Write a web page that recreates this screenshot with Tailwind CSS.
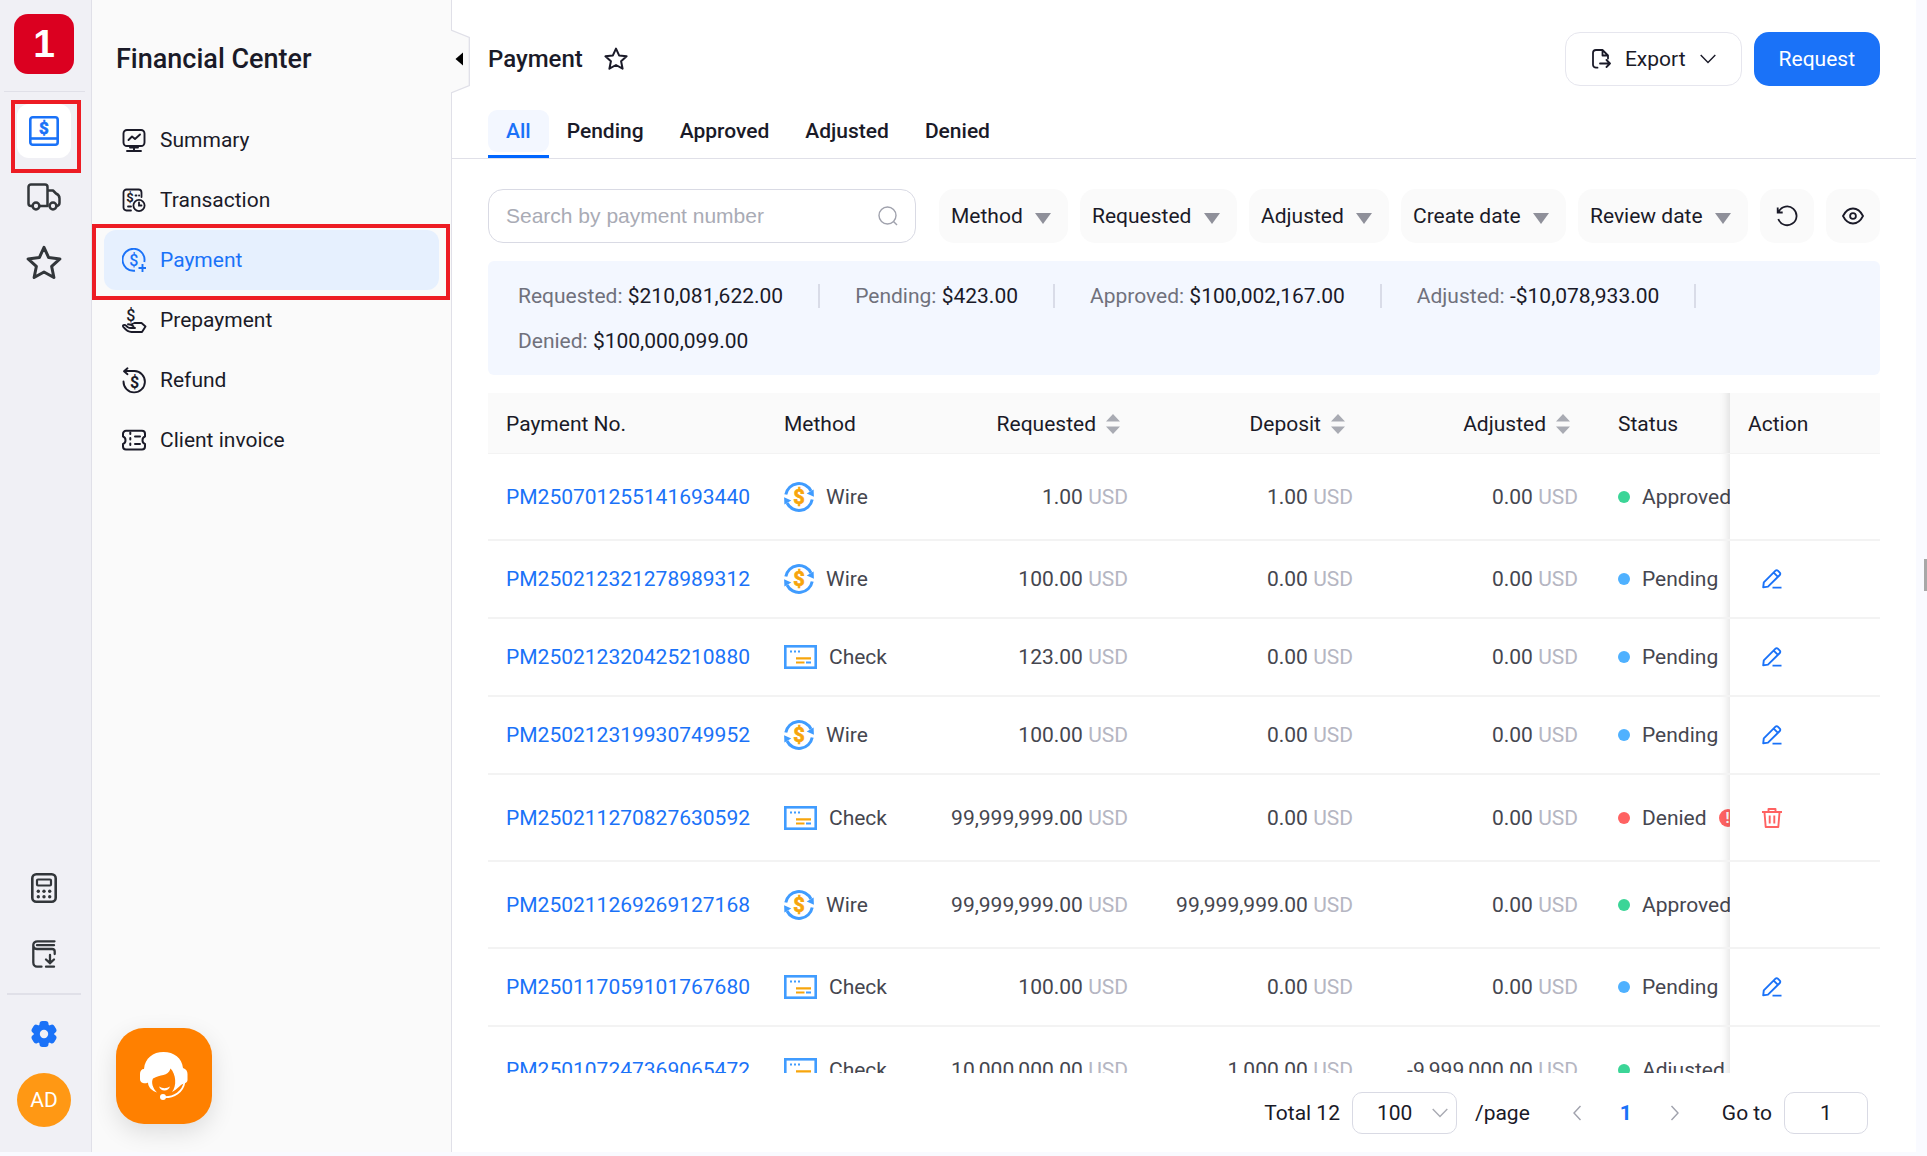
<!DOCTYPE html>
<html lang="en">
<head>
  <meta charset="UTF-8">
  <meta name="viewport" content="width=device-width, initial-scale=1.0">
  <title>Payment - Financial Center</title>
  <script src="https://cdn.jsdelivr.net/npm/@tailwindcss/browser@4"></script>
</head>
<body class="h-screen overflow-hidden flex pb-1 pr-[11px] bg-[#f9faff] text-[#1a1a28] text-[21px] leading-[30px] font-[Roboto,'Liberation_Sans',sans-serif]">

  <!-- Icon sprite -->
  <svg class="hidden">
    <symbol id="i-star" viewBox="0 0 24 24"><path fill="none" stroke="currentColor" stroke-width="2" stroke-linejoin="round" d="M12 1.6l3.1 6.8 7.5.9-5.5 5 1.5 7.4L12 18l-6.6 3.7 1.5-7.4-5.5-5 7.5-.9z"/></symbol>
    <symbol id="i-caret" viewBox="0 0 16 11"><path fill="currentColor" d="M0 0h16L8 11z"/></symbol>
    <symbol id="i-down" viewBox="0 0 16 10"><path fill="none" stroke="currentColor" stroke-width="1.4" d="M.7 1L8 8.6 15.3 1"/></symbol>
    <symbol id="i-sort" viewBox="0 0 14 20"><path fill="currentColor" d="M7 0l7 7.5H0zM0 12.5h14L7 20z"/></symbol>
    <symbol id="i-wire" viewBox="0 0 30 30">
      <path fill="none" stroke="#409cff" stroke-width="3" d="M1.8 12.5A13.4 13.4 0 0 1 27 9M28.2 17.5A13.4 13.4 0 0 1 3 21"/>
      <path fill="#409cff" d="M29.6 7.5l.3 7.3-7.2-3.2zM.4 22.5l-.3-7.3 7.2 3.2z"/>
      <text x="15" y="22" text-anchor="middle" font-size="20" font-weight="700" fill="#f7a50c" stroke="#f7a50c" stroke-width=".7">$</text>
    </symbol>
    <symbol id="i-check" viewBox="0 0 33 24">
      <rect x="1.3" y="1.3" width="30.4" height="21.4" fill="#fff" stroke="#409cff" stroke-width="2.6"/>
      <path stroke="#409cff" stroke-width="2" d="M6 6.5h2M10 6.5h2M14 6.5h2M22 17.5h5"/>
      <path stroke="#f7a50c" stroke-width="2.2" d="M12 13.3h15M12 17.5h8.500"/>
    </symbol>
    <symbol id="i-edit" viewBox="0 0 20 20"><path fill="none" stroke="currentColor" stroke-width="1.9" stroke-linejoin="round" d="M1.200 18.400l.6-5L13.500 1.700a1.600 1.600 0 0 1 2.300 0l2 2a1.600 1.600 0 0 1 0 2.300L6 17.600zM11.700 3.700l4 4M10.500 18.600H19.500"/></symbol>
    <symbol id="i-trash" viewBox="0 0 20 20"><path fill="none" stroke="currentColor" stroke-width="1.9" stroke-linejoin="round" d="M0 4h20M6.500 3.500V1h7v2.500M2.500 4.500L3.700 19h12.600L17.500 4.500M7.700 7.500v8M12.300 7.500v8"/></symbol>
  </svg>

  <!-- Icon rail -->
  <aside class="w-[92px] shrink-0 pt-[14px] pb-[25px] pr-[3px] flex flex-col items-center gap-3 bg-[#f0f0f5] border-r border-[#e0e0e8] text-[#32363a]">
    <a href="#" aria-label="Home" class="size-15 rounded-[14px] bg-[#db0020] text-white font-bold text-[39px] grid place-items-center font-['Liberation_Sans',sans-serif]">1</a>
    <hr class="w-[81px] mt-[5px] border-[#e0e0e8]">
    <a href="#" aria-label="Finance" class="relative size-[54px] rounded-xl bg-white text-[#1a72f8] grid place-items-center">
      <svg class="size-[30px]" viewBox="0 0 30 30"><g fill="none" stroke="currentColor" stroke-width="2.600"><rect x="1.300" y="1.300" width="27.400" height="27.400" rx="2.500"/><path d="M1.300 22.500h27.400"/></g><text x="15" y="17.700" text-anchor="middle" font-size="17" font-weight="700" fill="currentColor" stroke="currentColor" stroke-width=".6">$</text></svg>
      <span class="absolute z-10 -left-[6px] -right-[10px] -top-1 -bottom-[15px] border-4 border-[#ed1c24] pointer-events-none"></span>
    </a>
    <a href="#" aria-label="Shipping" class="size-[54px] grid place-items-center">
      <svg class="w-[34px] h-7" viewBox="0 0 34 28" fill="none" stroke="currentColor" stroke-width="2.500" stroke-linejoin="round"><path d="M5.500 23H4a2.500 2.500 0 0 1-2.500-2.500V4A2.500 2.500 0 0 1 4 1.500h14A2.500 2.500 0 0 1 20.500 4v19h-8M20.500 7.500h5.500l3 3c2.500 1 3.500 2.500 3.500 5V20a3 3 0 0 1-3 3"/><circle cx="9" cy="23" r="3.400"/><circle cx="26" cy="23" r="3.400"/></svg>
    </a>
    <a href="#" aria-label="Favorites" class="size-[54px] grid place-items-center"><svg class="size-9"><use href="#i-star"/></svg></a>

    <a href="#" aria-label="Calculator" class="mt-auto size-[54px] grid place-items-center">
      <svg class="w-[26px] h-[30px]" viewBox="0 0 26 30"><g fill="none" stroke="currentColor"><rect x="1.300" y="1.300" width="23.400" height="27.400" rx="4" stroke-width="2.600"/><rect x="6" y="6.500" width="14" height="6" rx="1" stroke-width="2.200"/></g><g fill="currentColor"><circle cx="7.300" cy="18.300" r="1.700"/><circle cx="13" cy="18.300" r="1.700"/><circle cx="18.700" cy="18.300" r="1.700"/><circle cx="7.300" cy="23.700" r="1.700"/><circle cx="13" cy="23.700" r="1.700"/><circle cx="18.700" cy="23.700" r="1.700"/></g></svg>
    </a>
    <a href="#" aria-label="Downloads" class="size-[54px] grid place-items-center">
      <svg class="w-6 h-7" viewBox="0 0 24 28" fill="none" stroke="currentColor" stroke-width="2.300" stroke-linecap="round"><path d="M22.500 1.300H5.500C3 1.300 1.300 3 1.300 5v17.500C1.300 25 3 26.700 5 26.700h4.500M1.300 5.500c0 2.300 1.500 3.500 3.500 3.500H20c1.800 0 2.700 1 2.700 2.500v2.500M5 5.200h17M14 26.700h8M18 15v8M14 19.500l4 3.700 4-3.700"/></svg>
    </a>
    <hr class="w-[74px] border-t-2 border-[#e0e0e8]">
    <a href="#" aria-label="Settings" class="size-[54px] grid place-items-center">
      <svg class="size-[26px] text-[#1a72f8]" viewBox="0 0 26 26" fill="currentColor"><rect x="8.500" y="0" width="9" height="26" rx="3"/><rect x="8.500" y="0" width="9" height="26" rx="3" transform="rotate(60 13 13)"/><rect x="8.500" y="0" width="9" height="26" rx="3" transform="rotate(120 13 13)"/><circle cx="13" cy="13" r="10.300"/><circle cx="13" cy="13" r="4.200" fill="#f0f0f5"/></svg>
    </a>
    <button type="button" class="size-[54px] rounded-full bg-[#ff9814] text-white">AD</button>
  </aside>

  <!-- Section menu -->
  <aside class="relative w-[360px] shrink-0 px-3 bg-[#fafafa] border-r border-[#e0e0e8] flex flex-col">
    <h2 class="mt-[41px] mb-[33px] px-3 text-[27px] leading-9 font-medium">Financial Center</h2>
    <nav class="flex flex-col">
      <a href="#" class="h-15 px-[18px] flex items-center gap-[14px]">
        <svg class="size-6" viewBox="0 0 24 24" fill="none" stroke="currentColor" stroke-width="1.900" stroke-linecap="round" stroke-linejoin="round"><rect x="1.500" y="2" width="21" height="16" rx="3.500"/><path d="M6.500 12l3.500-3.500 3 2.500 5-4.500M12 18v4M8 19.500h8M5 23h14"/></svg>
        Summary
      </a>
      <a href="#" class="h-15 px-[18px] flex items-center gap-[14px]">
        <svg class="size-6" viewBox="0 0 24 24" fill="none" stroke="currentColor" stroke-width="1.800" stroke-linecap="round"><path d="M9 22.500H4.500a3 3 0 0 1-3-3v-15a3 3 0 0 1 3-3h12a3 3 0 0 1 3 3V9M13.500 7.500h1M17 7.500h.2M6 18.500h3"/><circle cx="17" cy="17.500" r="5.600"/><path d="M17 14.500v3h2.500"/><text x="8" y="14" text-anchor="middle" font-size="13" font-weight="700" fill="currentColor" stroke="none">$</text></svg>
        Transaction
      </a>
      <a href="#" class="relative h-15 px-[18px] flex items-center gap-[14px] rounded-xl bg-[#e6f0fe] text-[#1a72f8]">
        <svg class="size-6" viewBox="0 0 24 24" fill="none" stroke="currentColor" stroke-width="1.900"><path d="M13 22.700A11 11 0 1 1 22.300 14"/><path d="M20.500 16v8M16.500 20h8"/><text x="11.700" y="17.500" text-anchor="middle" font-size="16" font-weight="500" fill="currentColor" stroke="none">$</text></svg>
        Payment
        <span class="absolute z-10 -left-3 -right-[11px] -top-[6px] -bottom-[10px] border-4 border-[#ed1c24] pointer-events-none"></span>
      </a>
      <a href="#" class="h-15 px-[18px] flex items-center gap-[14px]">
        <svg class="size-6 overflow-visible" viewBox="0 0 24 24" fill="none" stroke="currentColor" stroke-width="1.900" stroke-linecap="round" stroke-linejoin="round"><path d="M1 17.500c1.500-1.500 3 0 4.500 1.500 1.500 1 3 1.200 4.500 1M6 16.300c2.500 0 4 .5 5.500 2M9 16.500l3.500-1.500h7l4 3.500-3.500 5.500H9.500C5 24 3.500 21.500 1 18.500M13 20h-3"/><text x="8.700" y="13" text-anchor="middle" font-size="16" font-weight="500" fill="currentColor" stroke="none">$</text></svg>
        Prepayment
      </a>
      <a href="#" class="h-15 px-[18px] flex items-center gap-[14px]">
        <svg class="size-6 overflow-visible" viewBox="0 0 24 24" fill="none" stroke="currentColor" stroke-width="1.900" stroke-linecap="round" stroke-linejoin="round"><path d="M1.500 13.500A10.700 10.700 0 1 0 12.500 3H2.500M5.500.300L2 3.200l3.500 3"/><text x="12.500" y="19.700" text-anchor="middle" font-size="16" font-weight="700" fill="currentColor" stroke="none">$</text></svg>
        Refund
      </a>
      <a href="#" class="h-15 px-[18px] flex items-center gap-[14px]">
        <svg class="size-6" viewBox="0 0 24 24" fill="none" stroke="currentColor" stroke-width="2" stroke-linecap="round" stroke-linejoin="round"><path d="M4 2.800h16a3 3 0 0 1 3 3V8.500c-1.500.5-2.500 2-2.500 3.700s1 3.300 2.500 3.700v2.700a3 3 0 0 1-3 3H4a3 3 0 0 1-3-3v-2.700c1.500-.4 2.500-2 2.500-3.700S2.500 9 1 8.500V5.800a3 3 0 0 1 3-3zM13 8.500h5M13 16h5"/><path d="M8.300 4.500v16" stroke-dasharray="1.500 4"/></svg>
        Client invoice
      </a>
    </nav>
    <button type="button" aria-label="Support" class="mt-auto mb-7 ml-3 size-24 shrink-0 rounded-[28px] bg-[#ff8000] text-white grid place-items-center shadow-[0_8px_24px_rgba(0,0,0,0.12)]">
      <svg class="size-12" viewBox="0 0 48 48" fill="currentColor">
        <path d="M4 17C5 6 13 0 23.500 0S42 6 43 16c3 1 4.500 3 4.500 6v6c0 2-1.500 3-3.500 3.500C41 32 38 37 32 40c5-6 4-18-1.500-23.500C28 25 20 22 13 26.500c-2 3.500-.5 9.500 4 14-5-1.500-9-5.500-9-10 0 .5-3 1-5 .5S0 29 0 27v-5c0-3 1.500-5 4-5z"/>
        <path d="M19 34.500q5.500 3.500 11 0-1.500 4-5.500 4T19 34.500z"/>
        <path fill="none" stroke="currentColor" stroke-width="1.700" d="M44.500 30C43 40 34 45.500 24 45.200"/>
        <circle cx="23" cy="45" r="3"/>
      </svg>
    </button>
    <!-- collapse handle -->
    <button type="button" aria-label="Collapse menu" class="absolute z-10 top-[29px] -right-[19px] w-[19px] h-[65px]">
      <svg class="w-[19px] h-[65px]" viewBox="0 0 19 65"><path fill="#fafafa" stroke="#e0e0e8" stroke-width="1.300" d="M0 1l18.300 7.500v48L0 64"/><path fill="#000" d="M4.500 30L12 23.500v13z"/></svg>
    </button>
  </aside>

  <main class="flex-1 min-w-0 flex flex-col bg-white">
    <header class="pt-8 px-9 border-b border-[#e0e0e8]">
      <div class="h-[54px] flex items-center">
        <h1 class="text-[24px] font-medium">Payment</h1>
        <button type="button" aria-label="Add to favorites" class="ml-[21px]"><svg class="size-6"><use href="#i-star"/></svg></button>
        <button type="button" aria-haspopup="menu" class="ml-auto h-[54px] px-[25px] flex items-center gap-[14px] rounded-[15px] border border-[#e6e6ee]">
          <svg class="size-5" viewBox="0 0 20 20" fill="none" stroke="currentColor" stroke-width="1.800" stroke-linecap="round" stroke-linejoin="round"><path d="M6.500 18.700H5a3 3 0 0 1-3-3V4a3 3 0 0 1 3-3h6.500L17 6.500v3M11.500 1v5.500H17M9 14.500h10M15.500 11l3.500 3.500-3.500 3.500"/></svg>
          Export
          <svg class="w-4 h-[10px]"><use href="#i-down"/></svg>
        </button>
        <button type="button" class="ml-3 h-[54px] px-[25px] rounded-[15px] bg-[#1a72f8] text-white">Request</button>
      </div>
      <div role="tablist" class="mt-6 flex font-medium">
        <button type="button" role="tab" aria-selected="true" class="border-b-3 border-[#0066ff] text-[#1a72f8]"><span class="h-[42px] mb-[3px] px-[18px] flex items-center rounded-[9px] bg-[#f3f7ff]">All</span></button>
        <button type="button" role="tab" class="border-b-3 border-transparent"><span class="h-[42px] mb-[3px] px-[18px] flex items-center">Pending</span></button>
        <button type="button" role="tab" class="border-b-3 border-transparent"><span class="h-[42px] mb-[3px] px-[18px] flex items-center">Approved</span></button>
        <button type="button" role="tab" class="border-b-3 border-transparent"><span class="h-[42px] mb-[3px] px-[18px] flex items-center">Adjusted</span></button>
        <button type="button" role="tab" class="border-b-3 border-transparent"><span class="h-[42px] mb-[3px] px-[18px] flex items-center">Denied</span></button>
      </div>
    </header>

    <div class="flex-1 min-h-0 pt-[30px] px-9 flex flex-col">
      <!-- Filters -->
      <form class="flex gap-3">
        <label class="flex-1 min-w-0 mr-[11px] h-[54px] px-[17px] flex items-center rounded-[15px] border border-[#d9dae4]">
          <input type="text" aria-label="Search by payment number" placeholder="Search by payment number" class="flex-1 min-w-0 outline-none font-['Liberation_Sans',sans-serif] placeholder:text-[#a9abb5]">
          <svg class="size-5 text-[#a0a2ad]" viewBox="0 0 20 20" fill="none" stroke="currentColor" stroke-width="1.400"><circle cx="9.500" cy="9.500" r="8.500"/><path d="M15.500 15.500l3.500 3.500"/></svg>
        </label>
        <div class="relative">
          <select aria-label="Method" class="appearance-none h-[54px] pl-3 pr-[45px] rounded-[15px] bg-[#fafafa]"><option>Method</option></select>
          <svg class="absolute right-[17px] top-6 w-4 h-[11px] text-[#8f909a] pointer-events-none"><use href="#i-caret"/></svg>
        </div>
        <div class="relative">
          <select aria-label="Requested" class="appearance-none h-[54px] pl-3 pr-[45px] rounded-[15px] bg-[#fafafa]"><option>Requested</option></select>
          <svg class="absolute right-[17px] top-6 w-4 h-[11px] text-[#8f909a] pointer-events-none"><use href="#i-caret"/></svg>
        </div>
        <div class="relative">
          <select aria-label="Adjusted" class="appearance-none h-[54px] pl-3 pr-[45px] rounded-[15px] bg-[#fafafa]"><option>Adjusted</option></select>
          <svg class="absolute right-[17px] top-6 w-4 h-[11px] text-[#8f909a] pointer-events-none"><use href="#i-caret"/></svg>
        </div>
        <div class="relative">
          <select aria-label="Create date" class="appearance-none h-[54px] pl-3 pr-[45px] rounded-[15px] bg-[#fafafa]"><option>Create date</option></select>
          <svg class="absolute right-[17px] top-6 w-4 h-[11px] text-[#8f909a] pointer-events-none"><use href="#i-caret"/></svg>
        </div>
        <div class="relative">
          <select aria-label="Review date" class="appearance-none h-[54px] pl-3 pr-[45px] rounded-[15px] bg-[#fafafa]"><option>Review date</option></select>
          <svg class="absolute right-[17px] top-6 w-4 h-[11px] text-[#8f909a] pointer-events-none"><use href="#i-caret"/></svg>
        </div>
        <button type="reset" aria-label="Reset" class="size-[54px] grid place-items-center rounded-[15px] bg-[#fafafa]">
          <svg class="size-[22px]" viewBox="0 0 22 22" fill="none" stroke="currentColor" stroke-width="1.800"><path d="M2.300 14A9.400 9.400 0 1 0 2.800 6.500M1.700 2.500v5h5"/></svg>
        </button>
        <button type="button" aria-label="Columns" class="size-[54px] grid place-items-center rounded-[15px] bg-[#fafafa]">
          <svg class="w-[22px] h-[18px]" viewBox="0 0 22 18" fill="none" stroke="currentColor" stroke-width="1.800"><path d="M1 9c2.500-5 6-7.500 10-7.500S18.500 4 21 9c-2.500 5-6 7.500-10 7.500S3.500 14 1 9z"/><circle cx="11" cy="9" r="2.900"/></svg>
        </button>
      </form>

      <!-- Totals -->
      <dl id="totals" class="mt-[18px] px-[30px] py-3 flex flex-wrap rounded-md bg-[#f3f7ff]"></dl>

      <!-- Payments -->
      <div class="mt-[18px] flex-1 min-h-0 overflow-hidden">
        <table class="w-full min-w-[1462px] table-fixed border-separate border-spacing-0">
          <thead>
            <tr class="h-[61px] text-left bg-[#fafafa] [&>th]:pt-[2px] [&>th]:font-normal [&>th]:border-b [&>th]:border-[#f3f3f3]">
              <th class="w-[278px] px-[18px]">Payment No.</th>
              <th class="w-[159px] px-[18px]">Method</th>
              <th class="w-[225px] pr-[30px]"><span class="flex items-center justify-end gap-[10px]">Requested <svg class="w-[14px] h-5 text-[#a9abb3]"><use href="#i-sort"/></svg></span></th>
              <th class="w-[225px] pr-[30px]"><span class="flex items-center justify-end gap-[10px]">Deposit <svg class="w-[14px] h-5 text-[#a9abb3]"><use href="#i-sort"/></svg></span></th>
              <th class="w-[225px] pr-[30px]"><span class="flex items-center justify-end gap-[10px]">Adjusted <svg class="w-[14px] h-5 text-[#a9abb3]"><use href="#i-sort"/></svg></span></th>
              <th class="w-[200px] px-[18px]">Status</th>
              <th class="w-[150px] px-[18px] sticky right-0 bg-[#fafafa] before:absolute before:inset-y-0 before:-left-[15px] before:w-[15px] before:shadow-[inset_-10px_0_8px_-8px_rgba(0,0,0,0.12)]">Action</th>
            </tr>
          </thead>
          <tbody id="payments" class="text-[#45464f]"></tbody>
        </table>
      </div>

      <!-- Pagination -->
      <div class="h-[79px] shrink-0 pr-3 flex items-center justify-end">
        <span>Total 12</span>
        <div class="relative ml-3">
          <select aria-label="Page size" class="appearance-none w-[105px] h-[42px] pl-6 rounded-[10px] border border-[#d9dae4]"><option>100</option></select>
          <svg class="absolute right-[9px] top-4 w-4 h-[10px] text-[#a9abb3] pointer-events-none"><use href="#i-down"/></svg>
        </div>
        <span class="ml-[18px]">/page</span>
        <button type="button" aria-label="Previous page" class="ml-[42px] text-[#a0a2ad]"><svg class="w-[10px] h-4" viewBox="0 0 10 16" fill="none" stroke="currentColor" stroke-width="1.400"><path d="M8.500 1L2 8l6.500 7"/></svg></button>
        <button type="button" class="mx-[38px] font-bold text-[#1a72f8]">1</button>
        <button type="button" aria-label="Next page" class="text-[#a0a2ad]"><svg class="w-[10px] h-4" viewBox="0 0 10 16" fill="none" stroke="currentColor" stroke-width="1.400"><path d="M1.500 1L8 8l-6.500 7"/></svg></button>
        <label for="goto" class="ml-[42px] mr-3">Go to</label>
        <input id="goto" type="text" value="1" class="w-[84px] h-[42px] text-center rounded-[10px] border border-[#d9dae4]">
      </div>
    </div>
  </main>

  <!-- page scrollbar thumb -->
  <div class="fixed right-0 top-[559px] w-[3px] h-8 bg-[#a8a8a8]"></div>

  <script>
    const totals = [
      ['Requested', '$210,081,622.00'],
      ['Pending', '$423.00'],
      ['Approved', '$100,002,167.00'],
      ['Adjusted', '-$10,078,933.00'],
      ['Denied', '$100,000,099.00']
    ];

    const payments = [
      { no: 'PM250701255141693440', method: 'Wire', requested: '1.00', deposit: '1.00', adjusted: '0.00', status: 'Approved' },
      { no: 'PM250212321278989312', method: 'Wire', requested: '100.00', deposit: '0.00', adjusted: '0.00', status: 'Pending' },
      { no: 'PM250212320425210880', method: 'Check', requested: '123.00', deposit: '0.00', adjusted: '0.00', status: 'Pending' },
      { no: 'PM250212319930749952', method: 'Wire', requested: '100.00', deposit: '0.00', adjusted: '0.00', status: 'Pending' },
      { no: 'PM250211270827630592', method: 'Check', requested: '99,999,999.00', deposit: '0.00', adjusted: '0.00', status: 'Denied' },
      { no: 'PM250211269269127168', method: 'Wire', requested: '99,999,999.00', deposit: '99,999,999.00', adjusted: '0.00', status: 'Approved' },
      { no: 'PM250117059101767680', method: 'Check', requested: '100.00', deposit: '0.00', adjusted: '0.00', status: 'Pending' },
      { no: 'PM250107247369065472', method: 'Check', requested: '10,000,000.00', deposit: '1,000.00', adjusted: '-9,999,000.00', status: 'Adjusted' }
    ];

    const dots = { Approved: 'bg-[#3bd597]', Adjusted: 'bg-[#3bd597]', Pending: 'bg-[#4fb1ff]', Denied: 'bg-[#ff6262]' };
    const icons = {
      Wire: '<svg class="size-[30px]"><use href="#i-wire"/></svg>',
      Check: '<svg class="w-[33px] h-6"><use href="#i-check"/></svg>'
    };
    const actions = {
      Pending: '<button type="button" aria-label="Edit" class="block ml-[14px] text-[#1a72f8]"><svg class="size-5"><use href="#i-edit"/></svg></button>',
      Denied: '<button type="button" aria-label="Delete" class="block ml-[14px] text-[#ff6262]"><svg class="size-5"><use href="#i-trash"/></svg></button>'
    };

    document.getElementById('totals').innerHTML = totals.map(([label, value], i) => `
      <div class="h-[45px] flex items-center">
        <dt class="text-[#70717c]">${label}:&nbsp;</dt>
        <dd>${value}</dd>
        ${i < totals.length - 1 ? '<span class="mx-[35px] w-[2px] h-6 bg-[#d9dce8]"></span>' : ''}
      </div>`).join('');

    const amount = (value) => `<td class="pr-[22px] text-right">${value} <span class="text-[#b5b6c2]">USD</span></td>`;

    document.getElementById('payments').innerHTML = payments.map((p) => `
      <tr class="${p.status === 'Pending' ? 'h-[78px]' : 'h-[87px]'} [&>td]:border-b-2 [&>td]:border-[#f3f3f3]">
        <td class="px-[18px]"><a href="#" class="text-[#1a72f8]">${p.no}</a></td>
        <td class="px-[18px]"><span class="flex items-center gap-3">${icons[p.method]}${p.method}</span></td>
        ${amount(p.requested)}${amount(p.deposit)}${amount(p.adjusted)}
        <td class="px-[18px]">
          <span class="flex items-center gap-3"><span class="size-3 rounded-full ${dots[p.status]}"></span>${p.status}
          ${p.status === 'Denied' ? '<span class="size-[18px] rounded-full bg-[#ff6262] text-white text-[15px] leading-[18px] font-bold text-center">!</span>' : ''}</span>
        </td>
        <td class="px-[18px] sticky right-0 bg-white before:absolute before:inset-y-0 before:-left-[15px] before:w-[15px] before:shadow-[inset_-10px_0_8px_-8px_rgba(0,0,0,0.12)]">${actions[p.status] || ''}</td>
      </tr>`).join('');
  </script>
</body>
</html>
